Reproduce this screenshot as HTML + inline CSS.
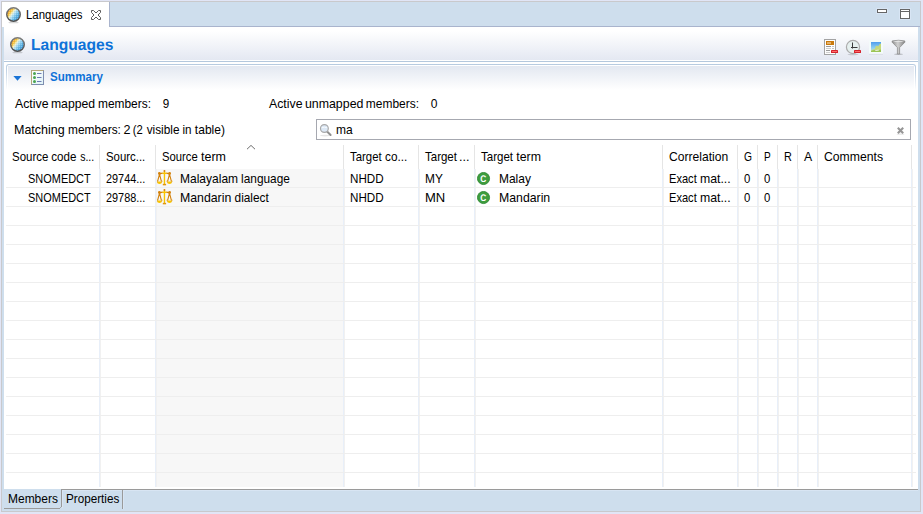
<!DOCTYPE html>
<html><head><meta charset="utf-8"><title>Languages</title>
<style>
html,body{margin:0;padding:0;}
body{width:923px;height:514px;overflow:hidden;background:#e1e5f6;position:relative;font-family:"Liberation Sans",sans-serif;font-size:13px;color:#000;}
div,span,svg{position:absolute;}
span{white-space:nowrap;line-height:20px;transform-origin:0 0;}
.hl{left:6px;width:910px;height:1px;background:#eee;}
.vl{top:169px;width:1px;height:318px;background:#e8eff9;border-right:1px solid #f1f1f1;}
.vh{top:145px;width:1px;height:24px;background:#e5e5e5;}
</style></head><body>
<!-- frame -->
<div style="left:1px;top:1px;width:920px;height:511px;background:#c9c9cc;"></div>
<div style="left:2px;top:2px;width:918px;height:509px;background:#cedeed;"></div>
<!-- tab -->
<div style="left:2px;top:2px;width:107px;height:25px;background:#fff;"></div>
<div style="left:109px;top:2px;width:1px;height:25px;background:#a9b4cd;"></div>
<div style="left:110px;top:26px;width:810px;height:1px;background:#a9b4cd;"></div>
<!-- content area -->
<div style="left:4px;top:27px;width:914px;height:462px;background:#fff;"></div>
<div style="left:4px;top:27px;width:914px;height:33px;background:linear-gradient(#fff,#fff 12%,#e4e8f2);"></div>
<div style="left:4px;top:61px;width:914px;height:1px;background:#b4c8dd;"></div>
<!-- section -->
<div style="left:6px;top:64px;width:910px;height:26px;border-radius:3px 3px 0 0;background:linear-gradient(#b7cbe0,#c5d5e6 30%,#fff);"></div>
<div style="left:7px;top:65px;width:908px;height:25px;border-radius:2px 2px 0 0;background:#fff;"></div>
<div style="left:8px;top:66px;width:906px;height:24px;background:linear-gradient(#e3e8f1,#fff);"></div>
<div style="left:316px;top:119px;width:595px;height:21px;border:1px solid #a6a8b0;box-sizing:border-box;background:#fff;"></div>
<!-- table -->
<div style="left:156px;top:169px;width:187px;height:318px;background:#f7f7f7;"></div>
<div class="vl" style="left:99px"></div>
<div class="vh" style="left:99px"></div>
<div class="vl" style="left:155px"></div>
<div class="vh" style="left:155px"></div>
<div class="vl" style="left:343px"></div>
<div class="vh" style="left:343px"></div>
<div class="vl" style="left:418px"></div>
<div class="vh" style="left:418px"></div>
<div class="vl" style="left:474px"></div>
<div class="vh" style="left:474px"></div>
<div class="vl" style="left:662px"></div>
<div class="vh" style="left:662px"></div>
<div class="vl" style="left:737px"></div>
<div class="vh" style="left:737px"></div>
<div class="vl" style="left:757px"></div>
<div class="vh" style="left:757px"></div>
<div class="vl" style="left:777px"></div>
<div class="vh" style="left:777px"></div>
<div class="vl" style="left:797px"></div>
<div class="vh" style="left:797px"></div>
<div class="vl" style="left:817px"></div>
<div class="vh" style="left:817px"></div>
<div class="vl" style="left:911px"></div>
<div class="vh" style="left:911px"></div>
<div class="hl" style="top:187px"></div>
<div class="hl" style="top:206px"></div>
<div class="hl" style="top:225px"></div>
<div class="hl" style="top:244px"></div>
<div class="hl" style="top:263px"></div>
<div class="hl" style="top:282px"></div>
<div class="hl" style="top:301px"></div>
<div class="hl" style="top:320px"></div>
<div class="hl" style="top:339px"></div>
<div class="hl" style="top:358px"></div>
<div class="hl" style="top:377px"></div>
<div class="hl" style="top:396px"></div>
<div class="hl" style="top:415px"></div>
<div class="hl" style="top:434px"></div>
<div class="hl" style="top:453px"></div>
<div class="hl" style="top:472px"></div>
<!-- bottom -->
<div style="left:62px;top:490px;width:856px;height:1px;background:#d8e5f3;"></div>
<div style="left:62px;top:490px;width:1px;height:18px;background:#d8e5f3;"></div>
<div style="left:123px;top:490px;width:1px;height:19px;background:#d8e5f3;"></div>
<div style="left:61px;top:489px;width:857px;height:1px;background:#9a9a9a;"></div>
<div style="left:61px;top:489px;width:1px;height:18px;background:#9a9a9a;"></div>
<div style="left:4px;top:508px;width:56px;height:1px;background:#9a9a9a;"></div>
<div style="left:60px;top:507px;width:1px;height:1px;background:#a6a8ab;"></div>
<div style="left:122px;top:490px;width:1px;height:19px;background:#9a9a9a;"></div>
<svg width="17" height="18" viewBox="0 0 17 18" style="left:5px;top:6px">
<defs><linearGradient id="gga" x1="0.08" y1="0.2" x2="0.85" y2="0.78">
<stop offset="0" stop-color="#f09a3a"/><stop offset="0.24" stop-color="#f6c53c"/><stop offset="0.4" stop-color="#f0f0cc"/><stop offset="0.52" stop-color="#b4e3f7"/><stop offset="0.78" stop-color="#62b6e6"/><stop offset="1" stop-color="#3f9ad6"/></linearGradient>
<linearGradient id="gsa" x1="0" y1="0" x2="0" y2="1"><stop offset="0" stop-color="#7d7d7d"/><stop offset="1" stop-color="#4e4e4e"/></linearGradient>
<pattern id="gpa" width="2" height="2" patternUnits="userSpaceOnUse"><rect x="0" y="0" width="1" height="1" fill="#fff" opacity=".28"/><rect x="1" y="1" width="1" height="1" fill="#000" opacity=".05"/></pattern></defs>
<ellipse cx="8.5" cy="16.4" rx="5" ry=".9" fill="#000" opacity=".16"/>
<circle cx="8.5" cy="8.5" r="6.75" fill="url(#gga)" stroke="url(#gsa)" stroke-width="1.5"/>
<circle cx="8.5" cy="8.5" r="6" fill="url(#gpa)"/>
</svg>
<svg width="17" height="18" viewBox="0 0 17 18" style="left:9px;top:36px">
<defs><linearGradient id="ggb" x1="0.08" y1="0.2" x2="0.85" y2="0.78">
<stop offset="0" stop-color="#f09a3a"/><stop offset="0.24" stop-color="#f6c53c"/><stop offset="0.4" stop-color="#f0f0cc"/><stop offset="0.52" stop-color="#b4e3f7"/><stop offset="0.78" stop-color="#62b6e6"/><stop offset="1" stop-color="#3f9ad6"/></linearGradient>
<linearGradient id="gsb" x1="0" y1="0" x2="0" y2="1"><stop offset="0" stop-color="#7d7d7d"/><stop offset="1" stop-color="#4e4e4e"/></linearGradient>
<pattern id="gpb" width="2" height="2" patternUnits="userSpaceOnUse"><rect x="0" y="0" width="1" height="1" fill="#fff" opacity=".28"/><rect x="1" y="1" width="1" height="1" fill="#000" opacity=".05"/></pattern></defs>
<ellipse cx="8.5" cy="16.4" rx="5" ry=".9" fill="#000" opacity=".16"/>
<circle cx="8.5" cy="8.5" r="6.75" fill="url(#ggb)" stroke="url(#gsb)" stroke-width="1.5"/>
<circle cx="8.5" cy="8.5" r="6" fill="url(#gpb)"/>
</svg>
<svg width="10" height="10" viewBox="0 0 10 10" style="left:91px;top:10px">
<path d="M0.5 0.5H2.5L5 3L7.5 0.5H9.5V2.5L7 5L9.5 7.5V9.5H7.5L5 7L2.5 9.5H0.5V7.5L3 5L0.5 2.5Z" fill="#fff" stroke="#5a5a5a" stroke-width="1" stroke-linejoin="round"/>
</svg>
<svg width="12" height="6" viewBox="0 0 12 6" style="left:876px;top:8px"><rect x="0" y="0" width="12" height="6" rx="1" fill="#d8e5f4"/><rect x="1.5" y="1.5" width="9" height="3" fill="#fff" stroke="#666" stroke-width="1"/></svg>
<svg width="12" height="12" viewBox="0 0 12 12" style="left:899px;top:8px"><rect x="0" y="0" width="12" height="12" rx="1" fill="#d8e5f4"/><rect x="1.5" y="1.5" width="9" height="9" fill="#fff" stroke="#666" stroke-width="1"/><rect x="1" y="3" width="10" height="1" fill="#666"/></svg>
<svg width="16" height="17" viewBox="0 0 16 17" style="left:823px;top:39px">
<rect x="1" y="15" width="12" height="1" fill="#000" opacity=".15"/>
<rect x="1.5" y="0.5" width="11" height="15" fill="#fdfdfd" stroke="#a3a3a3"/>
<rect x="3" y="2" width="8" height="4" fill="#c9790c"/><rect x="4" y="3.5" width="4" height="1" fill="#fbe9c8"/>
<rect x="3" y="7" width="5" height="1" fill="#9a9a9a"/><rect x="9" y="7" width="2" height="1" fill="#c4c4c4"/>
<rect x="3" y="9" width="5" height="1" fill="#cfcfcf"/><rect x="9" y="9" width="2" height="1" fill="#c4c4c4"/>
<rect x="3" y="11" width="4" height="1" fill="#9a9a9a"/>
<rect x="3" y="13" width="4" height="1" fill="#cfcfcf"/>
<rect x="8" y="11" width="7" height="3" rx=".6" fill="#d5232c"/><rect x="9" y="12" width="5" height="1" fill="#ff6b6b"/>
</svg>
<svg width="17" height="17" viewBox="0 0 17 17" style="left:845px;top:39px">
<ellipse cx="8" cy="15.5" rx="5.5" ry=".8" fill="#000" opacity=".15"/>
<circle cx="8" cy="8" r="6.6" fill="#e6f0ef" stroke="#acacac" stroke-width="1.2"/>
<path d="M7.5 3.5V9.5M6 8.5H12.5" stroke="#3a3a3a" stroke-width="1" fill="none"/>
<rect x="9" y="11" width="7" height="3" rx=".6" fill="#d5232c"/><rect x="10" y="12" width="5" height="1" fill="#ff6b6b"/>
</svg>
<svg width="16" height="16" viewBox="0 0 16 16" style="left:868px;top:39px">
<defs><linearGradient id="sky" x1="0" y1="0" x2="0" y2="1"><stop offset="0" stop-color="#4f9dee"/><stop offset="0.6" stop-color="#8fd0f0"/><stop offset="1" stop-color="#cde8d0"/></linearGradient></defs>
<rect x="1" y="14.4" width="14" height="1" fill="#000" opacity=".12"/>
<rect x="1" y="0.6" width="14" height="14.2" fill="#f4fbfa"/>
<rect x="3" y="3" width="10" height="10" fill="url(#sky)"/>
<path d="M3 13V11.5L5 10.5L7 10L7.5 7.5L9 6.5L10 7.5L11.5 5.5L12 4.5L13 5V13Z" fill="#c6d87c"/>
<path d="M3 13V12L6 11L9 11.5L13 10.5V13Z" fill="#9cc455"/>
<path d="M7 11.2L10.5 10.6L11 11.4L7.5 12Z" fill="#e9efe0"/>
</svg>
<svg width="16" height="17" viewBox="0 0 16 17" style="left:891px;top:39px">
<defs><linearGradient id="fn" x1="0" y1="0" x2="1" y2="0"><stop offset="0" stop-color="#8e8e8e"/><stop offset="0.45" stop-color="#d0d0d0"/><stop offset="1" stop-color="#828282"/></linearGradient></defs>
<ellipse cx="7.5" cy="15.2" rx="4.5" ry=".8" fill="#000" opacity=".2"/>
<path d="M1.2 1.9Q7.5 0.6 13.8 1.9L13.9 3.2L8.6 8.6V15H6.4V8.6L1.1 3.2Z" fill="url(#fn)" stroke="#858585" stroke-width=".7" stroke-linejoin="round"/>
<path d="M1.8 2.3Q7.5 1.3 13.2 2.3Q7.5 3.3 1.8 2.3Z" fill="#ededed"/>
</svg>
<svg width="10" height="6" viewBox="0 0 10 6" style="left:13px;top:76px"><path d="M0.4 0H8.6L4.5 4.8Z" fill="#1b74d6"/></svg>
<svg width="13" height="15" viewBox="0 0 13 15" style="left:31px;top:70px">
<defs><linearGradient id="li" x1="0" y1="0" x2="1" y2="1"><stop offset="0" stop-color="#fff"/><stop offset="1" stop-color="#def2f6"/></linearGradient></defs>
<rect x="0.5" y="0.5" width="12" height="14" fill="url(#li)" stroke="#7d8eb0"/>
<path d="M0.5 14.5V0.5H12.5" fill="none" stroke="#b7a878"/>
<circle cx="3.5" cy="3.5" r="1.5" fill="#4aa552"/><circle cx="3.5" cy="7.5" r="1.5" fill="#4aa552"/><circle cx="3.5" cy="11.5" r="1.5" fill="#4aa552"/>
<rect x="6" y="3" width="4.5" height="1" fill="#6d7bb3"/><rect x="6" y="7" width="4.5" height="1" fill="#6d7bb3"/><rect x="6" y="11" width="4.5" height="1" fill="#6d7bb3"/>
</svg>
<svg width="14" height="14" viewBox="0 0 14 14" style="left:319px;top:123px">
<ellipse cx="6" cy="12.6" rx="5" ry=".8" fill="#000" opacity=".10"/>
<path d="M7.8 8.2L11.6 12" stroke="#8f8f8f" stroke-width="2" stroke-linecap="round"/>
<circle cx="5.4" cy="5.5" r="3.9" fill="#dce8f5" stroke="#a9a9a9" stroke-width="1.2"/>
<path d="M2.6 4.8Q5.4 3.6 8.2 4.8" stroke="#f7fbff" stroke-width="1" fill="none"/>
</svg>
<svg width="9" height="9" viewBox="0 0 9 9" style="left:896px;top:126px">
<ellipse cx="4.5" cy="8.2" rx="4" ry=".6" fill="#000" opacity=".10"/>
<path d="M1.8 1.8L7.2 7.2M7.2 1.8L1.8 7.2" stroke="#969696" stroke-width="2.1"/>
</svg>
<svg width="10" height="6" viewBox="0 0 10 6" style="left:246px;top:144px"><path d="M1 5.2L5 1.4L9 5.2" fill="none" stroke="#6e6e6e" stroke-width="1"/></svg>
<svg width="16" height="16" viewBox="0 0 16 16" style="left:157px;top:170px">
<path d="M7.45 1.5V14" stroke="#f9c400" stroke-width="1.4" fill="none"/>
<path d="M5.2 3.3H9.7" stroke="#f9c400" stroke-width="1.5" fill="none"/>
<path d="M5.4 3.2L2.6 3.9M9.5 3.2L12.4 3.9" stroke="#d4820c" stroke-width="1.2" fill="none"/>
<circle cx="7.45" cy="1" r="1" fill="#d4820c"/>
<circle cx="2.4" cy="3.5" r="1.4" fill="#d4820c"/><circle cx="12.6" cy="3.5" r="1.4" fill="#d4820c"/>
<path d="M2.5 4.2L0.6 11.4M2.5 4.2L4.4 11.4M12.5 4.2L10.6 11.4M12.5 4.2L14.4 11.4" stroke="#d4820c" stroke-width="1.1" fill="none"/>
<path d="M0 11.4H5Q4.9 13.9 2.5 13.9Q0.1 13.9 0 11.4ZM10 11.4H15Q14.9 13.9 12.5 13.9Q10.1 13.9 10 11.4Z" fill="#f9c400"/>
<path d="M0.2 10.6Q0 11.6 0.4 12.4M4.8 10.6Q5 11.6 4.6 12.4M10.2 10.6Q10 11.6 10.4 12.4M14.8 10.6Q15 11.6 14.6 12.4" stroke="#d88f0c" stroke-width=".9" fill="none"/>
<path d="M5.8 14.6H9.1" stroke="#de9510" stroke-width="1.5" fill="none"/>
</svg>
<svg width="16" height="16" viewBox="0 0 16 16" style="left:157px;top:189px">
<path d="M7.45 1.5V14" stroke="#f9c400" stroke-width="1.4" fill="none"/>
<path d="M5.2 3.3H9.7" stroke="#f9c400" stroke-width="1.5" fill="none"/>
<path d="M5.4 3.2L2.6 3.9M9.5 3.2L12.4 3.9" stroke="#d4820c" stroke-width="1.2" fill="none"/>
<circle cx="7.45" cy="1" r="1" fill="#d4820c"/>
<circle cx="2.4" cy="3.5" r="1.4" fill="#d4820c"/><circle cx="12.6" cy="3.5" r="1.4" fill="#d4820c"/>
<path d="M2.5 4.2L0.6 11.4M2.5 4.2L4.4 11.4M12.5 4.2L10.6 11.4M12.5 4.2L14.4 11.4" stroke="#d4820c" stroke-width="1.1" fill="none"/>
<path d="M0 11.4H5Q4.9 13.9 2.5 13.9Q0.1 13.9 0 11.4ZM10 11.4H15Q14.9 13.9 12.5 13.9Q10.1 13.9 10 11.4Z" fill="#f9c400"/>
<path d="M0.2 10.6Q0 11.6 0.4 12.4M4.8 10.6Q5 11.6 4.6 12.4M10.2 10.6Q10 11.6 10.4 12.4M14.8 10.6Q15 11.6 14.6 12.4" stroke="#d88f0c" stroke-width=".9" fill="none"/>
<path d="M5.8 14.6H9.1" stroke="#de9510" stroke-width="1.5" fill="none"/>
</svg>
<svg width="14" height="14" viewBox="0 0 14 14" style="left:477px;top:172px">
<circle cx="6.5" cy="6.5" r="6.05" fill="#3e9d3e" stroke="#2f8a35" stroke-width=".9"/>
<text transform="translate(6.3 10.05) scale(.86 1)" font-family="Liberation Sans, sans-serif" font-size="9.7" font-weight="bold" fill="#fff" text-anchor="middle" style="text-rendering:geometricPrecision">C</text>
</svg>
<svg width="14" height="14" viewBox="0 0 14 14" style="left:477px;top:191px">
<circle cx="6.5" cy="6.5" r="6.05" fill="#3e9d3e" stroke="#2f8a35" stroke-width=".9"/>
<text transform="translate(6.3 10.05) scale(.86 1)" font-family="Liberation Sans, sans-serif" font-size="9.7" font-weight="bold" fill="#fff" text-anchor="middle" style="text-rendering:geometricPrecision">C</text>
</svg>
<span id="tabtxt" style="left:0;top:5px;transform:translateX(26.00px) scaleX(0.8784);">Languages</span>
<span id="title" style="left:0;top:36px;transform:translateX(31.00px) scaleX(0.9755);font-size:16px;text-rendering:geometricPrecision;font-weight:bold;color:#0e72d8;">Languages</span>
<span id="summary" style="left:0;top:67px;transform:translateX(50.00px) scaleX(0.8932);font-weight:bold;color:#0e72d8;">Summary</span>
<span id="amm" style="left:0;top:94px;transform:translateX(15.00px) scaleX(0.9468);">Active</span> <span style="left:0;top:94px;transform:translateX(50.89px) scaleX(0.9407);">mapped</span> <span style="left:0;top:94px;transform:translateX(98.01px) scaleX(0.9161);">members:</span>
<span id="n9" style="left:0;top:94px;transform:translateX(162.65px) scaleX(0.8960);">9</span>
<span id="aum" style="left:0;top:94px;transform:translateX(269.00px) scaleX(0.9468);">Active</span> <span style="left:0;top:94px;transform:translateX(304.89px) scaleX(0.9523);">unmapped</span> <span style="left:0;top:94px;transform:translateX(365.81px) scaleX(0.9196);">members:</span>
<span id="n0" style="left:0;top:94px;transform:translateX(430.64px) scaleX(0.9280);">0</span>
<span id="mm" style="left:0;top:120px;transform:translateX(14.00px) scaleX(0.9615);">Matching</span> <span style="left:0;top:120px;transform:translateX(68.12px) scaleX(0.9125);">members:</span> <span style="left:0;top:120px;transform:translateX(123.62px) scaleX(0.9667);">2</span> <span style="left:0;top:120px;transform:translateX(132.85px) scaleX(0.8683);">(2</span> <span style="left:0;top:120px;transform:translateX(146.70px) scaleX(0.9070);">visible</span> <span style="left:0;top:120px;transform:translateX(182.53px) scaleX(0.8941);">in</span> <span style="left:0;top:120px;transform:translateX(194.87px) scaleX(0.9238);">table)</span>
<span id="ma" style="left:0;top:120px;transform:translateX(336.00px) scaleX(0.9222);">ma</span>
<span id="h1" style="left:0;top:147px;transform:translateX(12.00px) scaleX(0.8815);">Source</span> <span style="left:0;top:147px;transform:translateX(51.26px) scaleX(0.8889);">code</span> <span style="left:0;top:147px;transform:translateX(80.20px) scaleX(0.8063);">s...</span>
<span id="h2" style="left:0;top:147px;transform:translateX(106.00px) scaleX(0.8754);">Sourc...</span>
<span id="h3" style="left:0;top:147px;transform:translateX(162.00px) scaleX(0.8667);">Source</span> <span style="left:0;top:147px;transform:translateX(201.06px) scaleX(0.9600);">term</span>
<span id="h4" style="left:0;top:147px;transform:translateX(350.00px) scaleX(0.8750);">Target</span> <span style="left:0;top:147px;transform:translateX(385.05px) scaleX(0.9043);">co...</span>
<span id="h5" style="left:0;top:147px;transform:translateX(425.00px) scaleX(0.8833);">Target</span> <span style="left:0;top:147px;transform:translateX(458.99px) scaleX(0.9647);">...</span>
<span id="h6" style="left:0;top:147px;transform:translateX(481.00px) scaleX(0.8861);">Target</span> <span style="left:0;top:147px;transform:translateX(516.26px) scaleX(0.9480);">term</span>
<span id="h7" style="left:0;top:147px;transform:translateX(669.00px) scaleX(0.9307);">Correlation</span>
<span id="h8" style="left:0;top:147px;transform:translateX(744.00px) scaleX(0.7892);">G</span>
<span id="h9" style="left:0;top:147px;transform:translateX(764.00px) scaleX(0.7750);">P</span>
<span id="h10" style="left:0;top:147px;transform:translateX(784.00px) scaleX(0.8343);">R</span>
<span id="h11" style="left:0;top:147px;transform:translateX(804.00px) scaleX(0.9412);">A</span>
<span id="h12" style="left:0;top:147px;transform:translateX(824.00px) scaleX(0.9392);">Comments</span>
<span id="r0c0" style="left:0;top:169px;transform:translateX(28.00px) scaleX(0.8432);">SNOMEDCT</span>
<span id="r0c1" style="left:0;top:169px;transform:translateX(106.00px) scaleX(0.8372);">29744...</span>
<span id="r0c2" style="left:0;top:169px;transform:translateX(180.00px) scaleX(0.9242);">Malayalam</span> <span style="left:0;top:169px;transform:translateX(241.12px) scaleX(0.9110);">language</span>
<span id="r0c3" style="left:0;top:169px;transform:translateX(350.00px) scaleX(0.8946);">NHDD</span>
<span id="r0c4" style="left:0;top:169px;transform:translateX(425.00px) scaleX(0.9143);">MY</span>
<span id="r0c5" style="left:0;top:169px;transform:translateX(499.00px) scaleX(0.9188);">Malay</span>
<span id="r0c6" style="left:0;top:169px;transform:translateX(669.00px) scaleX(0.8523);">Exact</span> <span style="left:0;top:169px;transform:translateX(699.99px) scaleX(0.9443);">mat...</span>
<span id="r0c7" style="left:0;top:169px;transform:translateX(744.00px) scaleX(0.8741);">0</span>
<span id="r0c8" style="left:0;top:169px;transform:translateX(764.00px) scaleX(0.8741);">0</span>
<span id="r1c0" style="left:0;top:188px;transform:translateX(28.00px) scaleX(0.8432);">SNOMEDCT</span>
<span id="r1c1" style="left:0;top:188px;transform:translateX(106.00px) scaleX(0.8372);">29788...</span>
<span id="r1c2" style="left:0;top:188px;transform:translateX(180.00px) scaleX(0.9465);">Mandarin</span> <span style="left:0;top:188px;transform:translateX(234.54px) scaleX(0.9108);">dialect</span>
<span id="r1c3" style="left:0;top:188px;transform:translateX(350.00px) scaleX(0.8946);">NHDD</span>
<span id="r1c4" style="left:0;top:188px;transform:translateX(425.00px) scaleX(1.0026);">MN</span>
<span id="r1c5" style="left:0;top:188px;transform:translateX(499.00px) scaleX(0.9446);">Mandarin</span>
<span id="r1c6" style="left:0;top:188px;transform:translateX(669.00px) scaleX(0.8523);">Exact</span> <span style="left:0;top:188px;transform:translateX(699.99px) scaleX(0.9443);">mat...</span>
<span id="r1c7" style="left:0;top:188px;transform:translateX(744.00px) scaleX(0.8741);">0</span>
<span id="r1c8" style="left:0;top:188px;transform:translateX(764.00px) scaleX(0.8741);">0</span>
<span id="members" style="left:0;top:489px;transform:translateX(8.00px) scaleX(0.9209);">Members</span>
<span id="props" style="left:0;top:489px;transform:translateX(66.00px) scaleX(0.8987);">Properties</span>
</body></html>
